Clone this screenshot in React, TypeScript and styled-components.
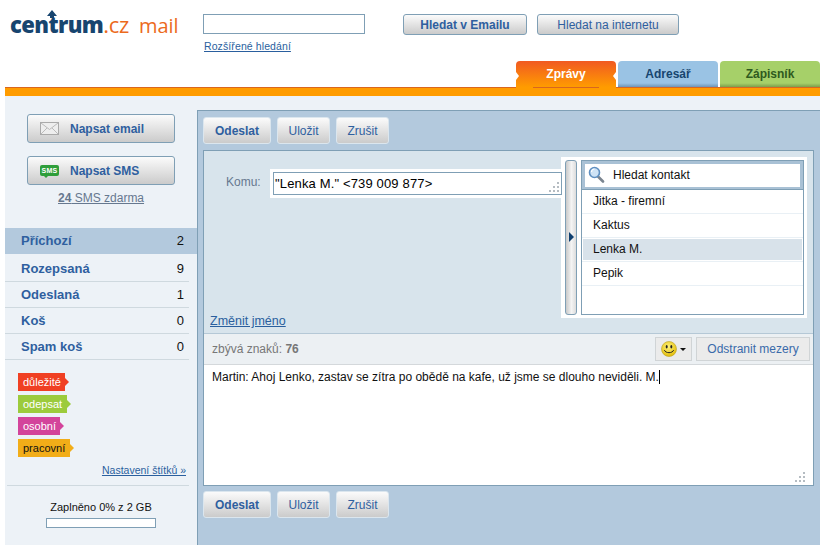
import React from "react";
import styled, { createGlobalStyle } from "styled-components";

const Global = createGlobalStyle`
  html, body { margin: 0; padding: 0; background: #fff; }
  body { font-family: "Liberation Sans", Arial, sans-serif; font-size: 12px; overflow: hidden; }
  a { cursor: pointer; }
`;

const Page = styled.div`
  width: 815px;
  height: 545px;
  margin-left: 5px;
  display: flex;
  flex-direction: column;
  overflow: hidden;
`;

const Header = styled.header`
  height: 87px;
  display: flex;
  flex-direction: column;
  flex: none;
`;

const TopRow = styled.div`
  height: 61px;
  display: flex;
  flex: none;
`;

const Logo = styled.div`
  width: 193px;
  margin-left: 5px;
  padding-top: 10px;
  font-family: "Open Sans", "Liberation Sans", sans-serif;
  font-size: 22px;
  line-height: 28px;
  white-space: nowrap;
  letter-spacing: -0.3px;
`;

const LogoMain = styled.span`
  position: relative;
  color: #17456f;
  font-weight: 800;
  letter-spacing: -0.6px;
`;

const LogoArrow = styled.svg`
  position: absolute;
  left: 36px;
  top: 1px;
`;

const LogoCz = styled.span`
  color: #ec6a1c;
  font-weight: 400;
`;

const LogoMail = styled.span`
  color: #ec6a1c;
  font-weight: 400;
  font-size: 20px;
  margin-left: 10px;
  letter-spacing: 0;
`;

const SearchCol = styled.div`
  width: 200px;
  padding-top: 14px;
`;

const SearchInput = styled.div`
  box-sizing: border-box;
  width: 162px;
  height: 20px;
  border: 1px solid #7f9fb5;
  background: #fff;
`;

const SearchLink = styled.a`
  display: block;
  margin: 6px 0 0 1px;
  font-size: 10.5px;
  line-height: 13px;
  color: #2a5f9e;
  text-decoration: underline;
  letter-spacing: 0.1px;
`;

const Button = styled.button<{ $w: number; $h?: number; $bold?: boolean; $light?: boolean }>`
  box-sizing: border-box;
  width: ${(p) => p.$w}px;
  height: ${(p) => p.$h ?? 21}px;
  flex: none;
  padding: 0;
  border: 1px solid ${(p) => (p.$light ? "#dbe6ee" : "#7f9fb5")};
  border-radius: 3px;
  background: linear-gradient(#fbfbfb, #cbcbcb);
  font-family: "Liberation Sans", Arial, sans-serif;
  font-size: 12px;
  font-weight: ${(p) => (p.$bold ? 700 : 400)};
  color: #2f5f9f;
  display: flex;
  align-items: center;
  justify-content: center;
`;

const SearchButtons = styled.div`
  display: flex;
  gap: 10px;
  padding-top: 14px;
  align-items: flex-start;
`;

const TabRow = styled.nav`
  height: 26px;
  display: flex;
  justify-content: flex-end;
  gap: 2px;
  flex: none;
`;

const Tab = styled.div<{ $bg: string; $color: string; $edge: string }>`
  box-sizing: border-box;
  width: 100px;
  height: 26px;
  border-radius: 4px 4px 0 0;
  background: linear-gradient(${(p) => p.$bg} 85%, ${(p) => p.$edge});
  color: ${(p) => p.$color};
  font-size: 12px;
  font-weight: 700;
  text-align: center;
  line-height: 27px;
`;

const ActiveTab = styled.div`
  position: relative;
  z-index: 2;
  box-sizing: border-box;
  width: 100px;
  height: 35px;
  border-radius: 4px 4px 0 0;
  background: linear-gradient(#f15a22, #ff9c00 75%);
  color: #fff;
  font-size: 12px;
  font-weight: 700;
  text-align: center;
  line-height: 27px;
  &::after {
    content: "";
    position: absolute;
    left: 17px;
    right: 17px;
    top: 26px;
    height: 1px;
    background: #d9661f;
  }
`;

const Notch = styled.i<{ $right?: boolean }>`
  position: absolute;
  top: 11px;
  ${(p) => (p.$right ? "right: 0;" : "left: 0;")}
  width: 0;
  height: 0;
  border-top: 4px solid transparent;
  border-bottom: 4px solid transparent;
  ${(p) => (p.$right ? "border-right: 3px solid #fff;" : "border-left: 3px solid #fff;")}
`;

const OrangeBar = styled.div`
  height: 8px;
  flex: none;
  background: #ff9c00;
  border-top: 1px solid #d9661f;
`;

const Main = styled.main`
  flex: 1;
  display: flex;
  background: #edf2f7;
  min-height: 0;
`;

const Sidebar = styled.aside`
  width: 192px;
  flex: none;
  display: flex;
  flex-direction: column;
`;

const SideButtons = styled.div`
  padding: 18px 0 0 22px;
  display: flex;
  flex-direction: column;
  gap: 13px;
`;

const ComposeButton = styled(Button)`
  justify-content: flex-start;
  padding-left: 12px;
  font-weight: 700;
  gap: 11px;
`;

const SmsIcon = styled.span`
  position: relative;
  box-sizing: border-box;
  width: 19px;
  height: 11px;
  background: #2f9e3a;
  border-radius: 2px;
  color: #fff;
  font-size: 7px;
  line-height: 11px;
  font-weight: 700;
  text-align: center;
  letter-spacing: 0.3px;
  &::after {
    content: "";
    position: absolute;
    left: 4px;
    top: 11px;
    border-top: 2px solid #2f9e3a;
    border-left: 2px solid transparent;
    border-right: 2px solid transparent;
  }
`;

const SmsFree = styled.a`
  display: block;
  margin: 6px 0 0 53px;
  width: 86px;
  height: 14px;
  font-size: 12px;
  line-height: 14px;
  color: #66788f;
  text-decoration: underline;
  white-space: nowrap;
`;

const Folders = styled.ul`
  list-style: none;
  margin: 23px 0 0;
  padding: 0;
`;

const Folder = styled.li<{ $active?: boolean }>`
  box-sizing: border-box;
  height: 26px;
  width: ${(p) => (p.$active ? 192 : 184)}px;
  padding: 0 ${(p) => (p.$active ? 13 : 5)}px 0 16px;
  margin-bottom: ${(p) => (p.$active ? 2 : 0)}px;
  display: flex;
  align-items: center;
  justify-content: space-between;
  background: ${(p) => (p.$active ? "#b3c9dd" : "transparent")};
  border-bottom: 1px solid ${(p) => (p.$active ? "#b3c9dd" : "#cfd9df")};
  font-size: 13px;
  font-weight: 700;
  color: #2f5f9f;
`;

const Count = styled.span`
  color: #111;
  font-size: 13px;
  font-weight: 400;
`;

const Labels = styled.div`
  padding: 13px 0 0 13px;
  display: flex;
  flex-direction: column;
  gap: 4px;
  align-items: flex-start;
`;

const Label = styled.span<{ $bg: string; $fg?: string; $w: number }>`
  position: relative;
  box-sizing: border-box;
  width: ${(p) => p.$w}px;
  height: 18px;
  padding-left: 5px;
  background: ${(p) => p.$bg};
  color: ${(p) => p.$fg ?? "#fff"};
  font-size: 11px;
  line-height: 18px;
  white-space: nowrap;
  &::after {
    content: "";
    position: absolute;
    left: 100%;
    top: 5px;
    border-left: 4px solid ${(p) => p.$bg};
    border-top: 4px solid transparent;
    border-bottom: 4px solid transparent;
  }
`;

const LabelSettings = styled.a`
  display: block;
  margin: 7px 0 0;
  width: 181px;
  text-align: right;
  font-size: 10.5px;
  line-height: 13px;
  color: #2a5f9e;
  text-decoration: underline;
`;

const SideRule = styled.div`
  margin: 8px 0 0 2px;
  width: 182px;
  height: 1px;
  background: #cfd9df;
`;

const Quota = styled.div`
  margin-top: 15px;
  width: 192px;
  display: flex;
  flex-direction: column;
  align-items: center;
  font-size: 11px;
  line-height: 13px;
  color: #111;
`;

const QuotaBar = styled.div`
  box-sizing: border-box;
  margin-top: 4px;
  width: 110px;
  height: 10px;
  background: #fff;
  border: 1px solid #7f9fb5;
`;

const Panel = styled.section`
  box-sizing: border-box;
  flex: 1;
  margin-top: 14px;
  background: #b3c9dd;
  border: 1px solid #7f9fb5;
  border-bottom: 0;
  border-right: 0;
  padding: 6px 6px 0 5px;
  display: flex;
  flex-direction: column;
`;

const Toolbar = styled.div`
  height: 27px;
  display: flex;
  gap: 6px;
  flex: none;
`;

const Composer = styled.div`
  box-sizing: border-box;
  margin: 6px 0 5px;
  height: 336px;
  border: 1px solid #7f9fb5;
  background: #fff;
  display: flex;
  flex-direction: column;
  flex: none;
`;

const Recipient = styled.div`
  height: 183px;
  flex: none;
  box-sizing: border-box;
  background: #d8e4ec;
  border-bottom: 1px solid #b5c8d6;
  display: flex;
`;

const RecipientMain = styled.div`
  flex: 1;
  min-width: 0;
  display: flex;
  flex-direction: column;
`;

const ToRow = styled.div`
  margin-top: 18px;
  padding-left: 22px;
  display: flex;
  align-items: flex-start;
`;

const ToLabel = styled.label`
  width: 44px;
  height: 29px;
  line-height: 26px;
  color: #66788f;
  font-size: 12px;
  flex: none;
`;

const ToHalo = styled.div`
  flex: 1;
  height: 29px;
  box-sizing: border-box;
  padding: 3px 0 3px 3px;
  background: #fff;
  margin-right: -1px;
`;

const ToInput = styled.div`
  position: relative;
  box-sizing: border-box;
  height: 23px;
  border: 1px solid #7f9fb5;
  background: #fff;
  padding-left: 1px;
  line-height: 21px;
  font-size: 13px;
  letter-spacing: 0.15px;
  color: #000;
  white-space: nowrap;
`;

const Grip = styled.svg`
  position: absolute;
  right: 2px;
  bottom: 2px;
`;

const MessageGrip = styled.div`
  position: absolute;
  right: 8px;
  bottom: 4px;
  width: 10px;
  height: 10px;
`;

const ChangeName = styled.a`
  margin: auto 0 5px 6px;
  font-size: 12.5px;
  line-height: 14px;
  color: #2a5f9e;
  text-decoration: underline;
`;

const ContactHalo = styled.div`
  box-sizing: border-box;
  width: 246px;
  height: 161px;
  margin: 6px 6px 0 0;
  padding: 3px 3px 3px 4px;
  background: #fff;
  display: flex;
  gap: 4px;
  flex: none;
`;

const Handle = styled.div`
  box-sizing: border-box;
  width: 12px;
  flex: none;
  border: 1px solid #7f9fb5;
  border-radius: 3px;
  background: linear-gradient(90deg, #c9c9c9, #f4f4f4 55%, #dcdcdc);
  display: flex;
  align-items: center;
  position: relative;
`;

const HandleArrow = styled.i`
  position: absolute;
  left: 3px;
  top: 71px;
  border-left: 5px solid #0f3f70;
  border-top: 5px solid transparent;
  border-bottom: 5px solid transparent;
`;

const ContactBox = styled.div`
  flex: 1;
  box-sizing: border-box;
  border: 1px solid #7f9fb5;
  background: #fff;
`;

const ContactSearch = styled.div`
  box-sizing: border-box;
  height: 28px;
  margin-bottom: 1px;
  padding: 0 0 2px 3px;
  background: #fff;
  border: 3px solid #a9c1d5;
  border-bottom-width: 2px;
  box-shadow: 0 1px 0 #7f9fb5;
  display: flex;
  align-items: center;
  gap: 8px;
  font-size: 12px;
  color: #111;
`;

const ContactRow = styled.div<{ $selected?: boolean }>`
  box-sizing: border-box;
  height: 24px;
  padding-left: 11px;
  line-height: 23px;
  font-size: 12px;
  color: #111;
  border-bottom: 1px solid #e9f0f5;
  background: ${(p) => (p.$selected ? "#d8e2ea" : "#fff")};
  box-shadow: ${(p) => (p.$selected ? "inset 0 0 0 1px #fff" : "none")};
`;

const Strip = styled.div`
  box-sizing: border-box;
  height: 31px;
  flex: none;
  background: #ecf0f3;
  border-bottom: 1px solid #d4d8db;
  display: flex;
  align-items: center;
  padding: 0 3px 0 8px;
  gap: 4px;
  font-size: 12px;
  color: #777;
`;

const StripText = styled.span`
  margin-right: auto;
`;

const FlatButton = styled.div<{ $w: number }>`
  box-sizing: border-box;
  width: ${(p) => p.$w}px;
  height: 24px;
  border: 1px solid #d0d4d6;
  background: #ebebeb;
  color: #3a6aaa;
  font-size: 12px;
  display: flex;
  align-items: center;
  justify-content: center;
  gap: 3px;
`;

const Caret = styled.i`
  border-top: 3px solid #111;
  border-left: 3px solid transparent;
  border-right: 3px solid transparent;
`;

const Message = styled.div`
  position: relative;
  flex: 1;
  background: #fff;
  padding: 5px 8px;
  font-size: 12px;
  line-height: 15px;
  color: #111;
  white-space: nowrap;
`;

const TextCaret = styled.span`
  display: inline-block;
  width: 1px;
  height: 14px;
  background: #000;
  vertical-align: -3px;
`;

const DotsPath = () => (
  <g fill="#b5bcc2">
    <rect x="8" y="0" width="2" height="2" />
    <rect x="4" y="4" width="2" height="2" />
    <rect x="8" y="4" width="2" height="2" />
    <rect x="0" y="8" width="2" height="2" />
    <rect x="4" y="8" width="2" height="2" />
    <rect x="8" y="8" width="2" height="2" />
  </g>
);

const GripDots = () => (
  <Grip width="10" height="10" viewBox="0 0 10 10">
    <DotsPath />
  </Grip>
);

const Envelope = () => (
  <svg width="19" height="13" viewBox="0 0 19 13">
    <rect x="0.5" y="0.5" width="18" height="12" fill="#eee" stroke="#aaa" />
    <path d="M1 1l8.5 6.5L18 1M1 12l6-6M18 12l-6-6" fill="none" stroke="#bbb" />
  </svg>
);

const Magnifier = () => (
  <svg width="17" height="17" viewBox="0 0 17 17">
    <path d="M9.5 10l5.5 5.5" stroke="#7b8590" strokeWidth="2.6" strokeLinecap="round" />
    <circle cx="6.5" cy="6.5" r="5" fill="#cfe3f5" stroke="#5f8fc0" strokeWidth="1.6" />
    <path d="M3.5 6a3 3 0 0 1 3-3" stroke="#fff" strokeWidth="1.2" fill="none" />
  </svg>
);

const Smiley = () => (
  <svg width="16" height="16" viewBox="0 0 16 16">
    <defs>
      <radialGradient id="sm" cx="45%" cy="35%" r="70%">
        <stop offset="0" stopColor="#fff27a" />
        <stop offset="1" stopColor="#e0b800" />
      </radialGradient>
    </defs>
    <circle cx="8" cy="8" r="7.5" fill="url(#sm)" stroke="#b8a020" strokeWidth="0.6" />
    <ellipse cx="5.7" cy="5.8" rx="1" ry="1.7" fill="#222" />
    <ellipse cx="10.3" cy="5.8" rx="1" ry="1.7" fill="#222" />
    <path d="M3.5 9.5c1 3 8 3 9 0" fill="none" stroke="#222" strokeWidth="1" strokeLinecap="round" />
  </svg>
);

const ActionBar = () => (
  <Toolbar>
    <Button $w={68} $h={27} $bold $light>Odeslat</Button>
    <Button $w={53} $h={27} $light>Uložit</Button>
    <Button $w={53} $h={27} $light>Zrušit</Button>
  </Toolbar>
);

export default function App() {
  return (
    <>
      <Global />
      <Page>
        <Header>
          <TopRow>
            <Logo>
              <LogoMain>
                centrum
                <LogoArrow width="12" height="8" viewBox="0 0 12 8">
                  <path d="M6 0l5 6H8v2H4V6H1z" fill="#17456f" />
                </LogoArrow>
              </LogoMain>
              <LogoCz>.cz</LogoCz>
              <LogoMail>mail</LogoMail>
            </Logo>
            <SearchCol>
              <SearchInput />
              <SearchLink>Rozšířené hledání</SearchLink>
            </SearchCol>
            <SearchButtons>
              <Button $w={124} $bold>Hledat v Emailu</Button>
              <Button $w={142}>Hledat na internetu</Button>
            </SearchButtons>
          </TopRow>
          <TabRow>
            <ActiveTab>
              <Notch />
              <Notch $right />
              Zprávy
            </ActiveTab>
            <Tab $bg="#9ac3e4" $edge="#6f94b4" $color="#17456f">Adresář</Tab>
            <Tab $bg="#a6d069" $edge="#7c9e4c" $color="#2f5a1e">Zápisník</Tab>
          </TabRow>
        </Header>
        <OrangeBar />
        <Main>
          <Sidebar>
            <SideButtons>
              <ComposeButton $w={148} $h={29}>
                <Envelope />
                <span>Napsat email</span>
              </ComposeButton>
              <ComposeButton $w={148} $h={29}>
                <SmsIcon>SMS</SmsIcon>
                <span>Napsat SMS</span>
              </ComposeButton>
            </SideButtons>
            <SmsFree><b>24</b> SMS zdarma</SmsFree>
            <Folders>
              <Folder $active>Příchozí<Count>2</Count></Folder>
              <Folder>Rozepsaná<Count>9</Count></Folder>
              <Folder>Odeslaná<Count>1</Count></Folder>
              <Folder>Koš<Count>0</Count></Folder>
              <Folder>Spam koš<Count>0</Count></Folder>
            </Folders>
            <Labels>
              <Label $w={47} $bg="#f04023">důležité</Label>
              <Label $w={49} $bg="#9ccb3c">odepsat</Label>
              <Label $w={42} $bg="#d3449b">osobní</Label>
              <Label $w={52} $bg="#f2ad18" $fg="#111">pracovní</Label>
            </Labels>
            <LabelSettings>Nastavení štítků »</LabelSettings>
            <SideRule />
            <Quota>
              Zaplněno 0% z 2 GB
              <QuotaBar />
            </Quota>
          </Sidebar>
          <Panel>
            <ActionBar />
            <Composer>
              <Recipient>
                <RecipientMain>
                  <ToRow>
                    <ToLabel>Komu:</ToLabel>
                    <ToHalo>
                      <ToInput>
                        "Lenka M." &lt;739 009 877&gt;
                        <GripDots />
                      </ToInput>
                    </ToHalo>
                  </ToRow>
                  <ChangeName>Změnit jméno</ChangeName>
                </RecipientMain>
                <ContactHalo>
                  <Handle><HandleArrow /></Handle>
                  <ContactBox>
                    <ContactSearch>
                      <Magnifier />
                      <span>Hledat kontakt</span>
                    </ContactSearch>
                    <ContactRow>Jitka - firemní</ContactRow>
                    <ContactRow>Kaktus</ContactRow>
                    <ContactRow $selected>Lenka M.</ContactRow>
                    <ContactRow>Pepik</ContactRow>
                  </ContactBox>
                </ContactHalo>
              </Recipient>
              <Strip>
                <StripText>zbývá znaků: <b>76</b></StripText>
                <FlatButton $w={37}>
                  <Smiley />
                  <Caret />
                </FlatButton>
                <FlatButton $w={114}>Odstranit mezery</FlatButton>
              </Strip>
              <Message>
                Martin: Ahoj Lenko, zastav se zítra po obědě na kafe, už jsme se dlouho neviděli. M.<TextCaret />
                <MessageGrip>
                  <svg width="10" height="10" viewBox="0 0 10 10"><DotsPath /></svg>
                </MessageGrip>
              </Message>
            </Composer>
            <ActionBar />
          </Panel>
        </Main>
      </Page>
    </>
  );
}
